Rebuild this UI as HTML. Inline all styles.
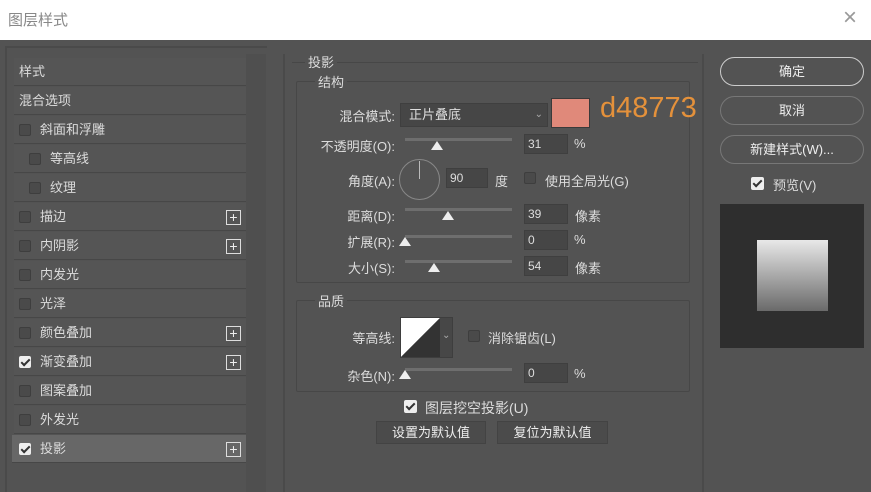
<!DOCTYPE html>
<html><head><meta charset="utf-8"><style>
*{margin:0;padding:0;box-sizing:border-box}
body{width:871px;height:492px;overflow:hidden;background:#535353;font-family:"Liberation Sans","Noto Sans CJK SC",sans-serif;color:#dcdcdc;font-size:13px;position:relative}
.a{position:absolute}
.title{left:0;top:0;width:871px;height:40px;background:#fff}
.row{left:14px;width:232px;height:28px;background:#555;border-bottom:1px solid #474747;line-height:28px}
.row span{position:absolute;top:0}
.cb{position:absolute;width:12px;height:12px;border:1px solid #3e3e3e;background:#4a4a4a;border-radius:2px}
.ck{background:#eee;border-color:#eee}
.ck:after{content:"";position:absolute;left:3px;top:0px;width:3px;height:7px;border:solid #333;border-width:0 2px 2px 0;transform:rotate(45deg)}
.plus{position:absolute;left:212px;top:7px;width:15px;height:15px;border:1px solid #ddd;color:#eee;font-size:14px;line-height:12px;text-align:center}
.lbl{text-align:right;width:90px;left:305px}
.inp{background:#464646;border:1px solid #3f3f3f;height:20px;line-height:18px;padding-left:3px;color:#ddd;font-size:12px}
.trk{height:3px;background:#6e6e6e;left:405px;width:107px}
.th{width:0;height:0;border-left:6px solid transparent;border-right:6px solid transparent;border-bottom:9px solid #eee}
.btn{border:1px solid #bbb;border-radius:15px;width:144px;height:29px;text-align:center;line-height:27px;color:#eee;left:720px}
.gb{border:1px solid #474747;border-radius:2px}
.b2{background:#4b4b4b;border:1px solid #434343;height:23px;line-height:21px;text-align:center;color:#eee}
</style></head><body>
<div class="a title"></div>
<div class="a" style="left:8px;top:9px;font-size:15px;color:#888">图层样式</div>
<div class="a" style="left:843px;top:4px;font-size:24px;color:#999;font-weight:300">×</div>

<div class="a" style="left:5px;top:46px;width:262px;height:446px;border-left:2px solid #4a4a4a;border-top:2px solid #4a4a4a"></div>
<div class="a" style="left:246px;top:54px;width:20px;height:438px;background:#4f4f4f"></div>
<div class="a" style="left:283px;top:54px;width:2px;height:438px;background:#4a4a4a"></div>
<div class="a" style="left:702px;top:54px;width:2px;height:438px;background:#4a4a4a"></div>

<div class="a row" style="top:58px"><span style="left:5px">样式</span></div>
<div class="a row" style="top:87px"><span style="left:5px">混合选项</span></div>
<div class="a row" style="top:116px"><div class="cb" style="left:5px;top:8px"></div><span style="left:26px">斜面和浮雕</span></div>
<div class="a row" style="top:145px"><div class="cb" style="left:15px;top:8px"></div><span style="left:36px">等高线</span></div>
<div class="a row" style="top:174px"><div class="cb" style="left:15px;top:8px"></div><span style="left:36px">纹理</span></div>
<div class="a row" style="top:203px"><div class="cb" style="left:5px;top:8px"></div><span style="left:26px">描边</span><div class="plus">+</div></div>
<div class="a row" style="top:232px"><div class="cb" style="left:5px;top:8px"></div><span style="left:26px">内阴影</span><div class="plus">+</div></div>
<div class="a row" style="top:261px"><div class="cb" style="left:5px;top:8px"></div><span style="left:26px">内发光</span></div>
<div class="a row" style="top:290px"><div class="cb" style="left:5px;top:8px"></div><span style="left:26px">光泽</span></div>
<div class="a row" style="top:319px"><div class="cb" style="left:5px;top:8px"></div><span style="left:26px">颜色叠加</span><div class="plus">+</div></div>
<div class="a row" style="top:348px"><div class="cb ck" style="left:5px;top:8px"></div><span style="left:26px">渐变叠加</span><div class="plus">+</div></div>
<div class="a row" style="top:377px"><div class="cb" style="left:5px;top:8px"></div><span style="left:26px">图案叠加</span></div>
<div class="a row" style="top:406px"><div class="cb" style="left:5px;top:8px"></div><span style="left:26px">外发光</span></div>
<div class="a row" style="top:435px;background:#676767;left:12px;width:234px"><div class="cb ck" style="left:7px;top:8px"></div><span style="left:28px">投影</span><div class="plus" style="left:214px">+</div></div>

<!-- middle -->
<div class="a" style="left:292px;top:62px;width:406px;height:1px;background:#474747"></div>
<div class="a" style="left:305px;top:52px;background:#535353;padding:0 3px">投影</div>
<div class="a gb" style="left:296px;top:81px;width:394px;height:202px"></div>
<div class="a" style="left:315px;top:72px;background:#535353;padding:0 3px">结构</div>

<div class="a lbl" style="top:106px">混合模式:</div>
<div class="a inp" style="left:400px;top:103px;width:148px;height:24px;line-height:22px;padding-left:8px;font-size:13px">正片叠底<span style="position:absolute;right:4px;font-size:10px;color:#aaa">⌄</span></div>
<div class="a" style="left:551px;top:98px;width:39px;height:30px;background:#e0897a;border:1px solid #3a3a3a"></div>
<div class="a" style="left:600px;top:92px;font-size:29px;color:#e4913b">d48773</div>

<div class="a lbl" style="top:136px">不透明度(O):</div>
<div class="a trk" style="top:138px"></div><div class="a th" style="left:431px;top:141px"></div>
<div class="a inp" style="left:524px;top:134px;width:44px">31</div><div class="a" style="left:574px;top:136px">%</div>

<div class="a lbl" style="top:171px">角度(A):</div>
<div class="a" style="left:399px;top:159px;width:41px;height:41px;border:1px solid #888;border-radius:50%"></div>
<div class="a" style="left:419px;top:161px;width:1px;height:18px;background:#bbb"></div>
<div class="a inp" style="left:446px;top:168px;width:42px">90</div><div class="a" style="left:495px;top:171px">度</div>
<div class="a cb" style="left:524px;top:172px"></div><div class="a" style="left:545px;top:171px">使用全局光(G)</div>

<div class="a lbl" style="top:206px">距离(D):</div>
<div class="a trk" style="top:208px"></div><div class="a th" style="left:442px;top:211px"></div>
<div class="a inp" style="left:524px;top:204px;width:44px">39</div><div class="a" style="left:575px;top:206px">像素</div>

<div class="a lbl" style="top:232px">扩展(R):</div>
<div class="a trk" style="top:235px"></div><div class="a th" style="left:399px;top:237px"></div>
<div class="a inp" style="left:524px;top:230px;width:44px">0</div><div class="a" style="left:574px;top:232px">%</div>

<div class="a lbl" style="top:258px">大小(S):</div>
<div class="a trk" style="top:260px"></div><div class="a th" style="left:428px;top:263px"></div>
<div class="a inp" style="left:524px;top:256px;width:44px">54</div><div class="a" style="left:575px;top:258px">像素</div>

<div class="a gb" style="left:296px;top:300px;width:394px;height:92px"></div>
<div class="a" style="left:315px;top:291px;background:#535353;padding:0 3px">品质</div>
<div class="a lbl" style="top:328px">等高线:</div>
<div class="a" style="left:400px;top:317px;width:53px;height:41px;background:#474747;border:1px solid #3e3e3e"></div>
<svg class="a" style="left:401px;top:318px" width="39" height="39"><polygon points="0,0 39,0 0,39" fill="#fff"/><polygon points="39,0 39,39 0,39" fill="#333"/></svg>
<div class="a" style="left:442px;top:330px;font-size:10px;color:#aaa">⌄</div>
<div class="a cb" style="left:468px;top:330px"></div><div class="a" style="left:488px;top:328px">消除锯齿(L)</div>

<div class="a lbl" style="top:366px">杂色(N):</div>
<div class="a trk" style="top:368px"></div><div class="a th" style="left:399px;top:370px"></div>
<div class="a inp" style="left:524px;top:363px;width:44px">0</div><div class="a" style="left:574px;top:366px">%</div>

<div class="a cb ck" style="left:404px;top:400px;width:13px;height:13px"></div><div class="a" style="left:425px;top:398px;font-size:14px">图层挖空投影(U)</div>
<div class="a b2" style="left:376px;top:421px;width:110px">设置为默认值</div>
<div class="a b2" style="left:497px;top:421px;width:111px">复位为默认值</div>

<!-- right -->
<div class="a btn" style="top:57px;border-color:#ccc">确定</div>
<div class="a btn" style="top:96px;border-color:#777">取消</div>
<div class="a btn" style="top:135px;border-color:#777">新建样式(W)...</div>
<div class="a cb ck" style="left:751px;top:177px;width:13px;height:13px"></div><div class="a" style="left:773px;top:175px">预览(V)</div>
<div class="a" style="left:720px;top:204px;width:144px;height:144px;background:#2e2e2e"></div>
<div class="a" style="left:757px;top:240px;width:71px;height:71px;background:linear-gradient(#e8e8e8,#6a6a6a)"></div>
</body></html>
